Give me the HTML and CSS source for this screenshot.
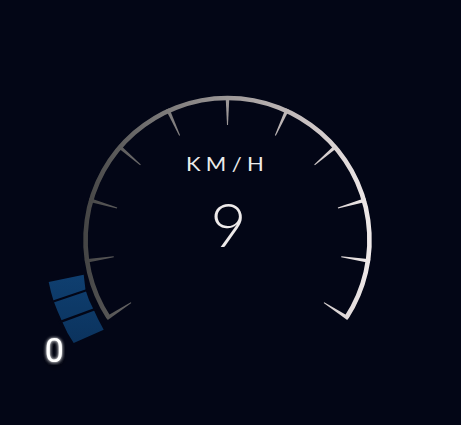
FILE: index.html
```html
<!DOCTYPE html>
<html lang="en">
<head>
<meta charset="utf-8">
<title>Speedometer</title>
<link rel="stylesheet" href="styles.css">
</head>
<body>
<main class="screen">
  <svg class="gauge" width="461" height="425" viewBox="0 0 461 425" xmlns="http://www.w3.org/2000/svg">
    <defs>
      <linearGradient id="dialGrad" gradientUnits="userSpaceOnUse" x1="85" y1="0" x2="372" y2="0">
        <stop offset="0" stop-color="#454545"/>
        <stop offset="0.25" stop-color="#787676"/>
        <stop offset="0.5" stop-color="#9d9898"/>
        <stop offset="0.78" stop-color="#cbc3c3"/>
        <stop offset="1" stop-color="#f0eaea"/>
      </linearGradient>
      <linearGradient id="barGrad" gradientUnits="userSpaceOnUse" x1="0" y1="274" x2="0" y2="343">
        <stop offset="0" stop-color="#0f3f70"/>
        <stop offset="1" stop-color="#0b335e"/>
      </linearGradient>
      <mask id="dialMask" maskUnits="userSpaceOnUse" x="0" y="0" width="461" height="425">
        <path class="dial-arc" d="M 108.4 317.3 A 142 142 0 1 1 346.6 317.3"/>
        <g class="dial-ticks">
          <polygon points="225.6,96 229.4,96 228,125 227,125" transform="rotate(-123 227.5 240)"/>
          <polygon points="225.6,96 229.4,96 228,125 227,125" transform="rotate(-98.4 227.5 240)"/>
          <polygon points="225.6,96 229.4,96 228,125 227,125" transform="rotate(-73.8 227.5 240)"/>
          <polygon points="225.6,96 229.4,96 228,125 227,125" transform="rotate(-49.2 227.5 240)"/>
          <polygon points="225.6,96 229.4,96 228,125 227,125" transform="rotate(-24.6 227.5 240)"/>
          <polygon points="225.6,96 229.4,96 228,125 227,125"/>
          <polygon points="225.6,96 229.4,96 228,125 227,125" transform="rotate(24.6 227.5 240)"/>
          <polygon points="225.6,96 229.4,96 228,125 227,125" transform="rotate(49.2 227.5 240)"/>
          <polygon points="225.6,96 229.4,96 228,125 227,125" transform="rotate(73.8 227.5 240)"/>
          <polygon points="225.6,96 229.4,96 228,125 227,125" transform="rotate(98.4 227.5 240)"/>
          <polygon points="225.6,96 229.4,96 228,125 227,125" transform="rotate(123 227.5 240)"/>
        </g>
      </mask>
      <filter id="glow" x="-60%" y="-60%" width="220%" height="220%">
        <feGaussianBlur in="SourceAlpha" stdDeviation="3" result="blurA"/>
        <feOffset in="blurA" dx="0" dy="3" result="shadow"/>
        <feFlood flood-color="#000000" flood-opacity="0.9"/>
        <feComposite in2="shadow" operator="in" result="darkShadow"/>
        <feGaussianBlur in="SourceGraphic" stdDeviation="1.4" result="whiteGlow"/>
        <feMerge>
          <feMergeNode in="darkShadow"/>
          <feMergeNode in="whiteGlow"/>
          <feMergeNode in="SourceGraphic"/>
        </feMerge>
      </filter>
    </defs>

    <rect class="dial-fill" x="0" y="0" width="461" height="425" fill="url(#dialGrad)" mask="url(#dialMask)"/>

    <g class="speed-bars">
      <polygon fill="url(#barGrad)" points="48.7,282 83.7,274.7 85.5,290 89,300 93.7,309.7 98,319 103.7,329.7 73.7,343 67.5,333 62,321.3 57.5,311 53.7,301.3 51,292"/>
      <line class="bar-gap" x1="51" y1="302.2" x2="88" y2="289.8"/>
      <line class="bar-gap" x1="59" y1="322.4" x2="97" y2="308.4"/>
    </g>

    <text class="unit" x="227.5" y="171.4" text-anchor="middle">KM/H</text>
    <text class="speed" x="228.6" y="246.7" text-anchor="middle">9</text>
    <text class="min-label" x="54.2" y="361.7" text-anchor="middle" filter="url(#glow)">0</text>
  </svg>
</main>
</body>
</html>
```

FILE: styles.css
```css
html, body {
  margin: 0;
  padding: 0;
  background: #030616;
}

.screen {
  width: 461px;
  height: 425px;
  overflow: hidden;
  background: #030616;
}

.gauge {
  display: block;
}

.dial-arc {
  fill: none;
  stroke: #ffffff;
  stroke-width: 4.6;
  stroke-linecap: butt;
}

.dial-ticks polygon {
  fill: #ffffff;
}

.bar-gap {
  stroke: #030616;
  stroke-width: 2.2;
}

.unit {
  font-family: "Lato", "DejaVu Sans", sans-serif;
  font-weight: 400;
  font-size: 19px;
  letter-spacing: 4.6px;
  fill: #ececec;
  transform-box: fill-box;
  transform-origin: center;
  transform: scaleX(1.16);
}

.speed {
  font-family: "Lato", "DejaVu Sans", sans-serif;
  font-weight: 300;
  font-size: 62px;
  fill: #eeeaea;
}

.min-label {
  font-family: "Roboto", "DejaVu Sans", sans-serif;
  font-weight: 400;
  font-size: 34px;
  fill: #ffffff;
}
```
